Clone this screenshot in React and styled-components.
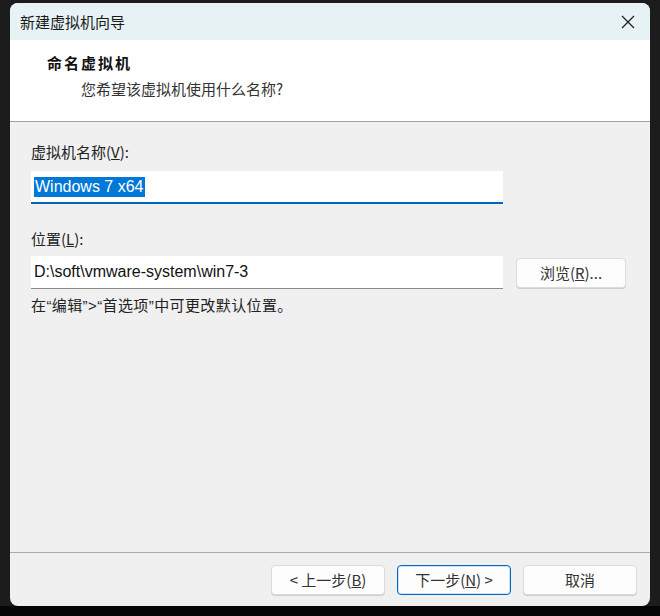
import React from "react";
import styled, { createGlobalStyle } from "styled-components";

const GlobalStyle = createGlobalStyle`
    html, body {
        margin: 0;
        padding: 0;
        background: #1c1c1c;
    }
    body {
        font-family: "Noto Sans CJK SC", "Liberation Sans", sans-serif;
        color: #1a1a1a;
    }
`;

const Screen = styled.div`
    width: 660px;
    height: 616px;
    padding: 3px 10px 0 10px;
    box-sizing: border-box;
    background: linear-gradient(#1c1c1c 0, #1c1c1c 606px, #050505 606px);
`;

const Window = styled.div`
    width: 640px;
    height: 603px;
    border-radius: 8px;
    overflow: hidden;
    background: #f0f0f0;
    display: flex;
    flex-direction: column;
`;

const TitleBar = styled.div`
    height: 37px;
    flex: none;
    display: flex;
    align-items: center;
    justify-content: space-between;
    padding: 0 14px 0 10px;
    background: #e7f2f5;
    font-size: 15px;
    color: #1a1a1a;
`;

const CloseIcon = styled.svg`
    width: 16px;
    height: 16px;
`;

const Header = styled.div`
    height: 82px;
    flex: none;
    background: #ffffff;
    border-bottom: 1px solid #a3a3a3;
    padding: 11px 0 0 37px;
    box-sizing: border-box;
`;

const HeaderTitle = styled.div`
    font-size: 15px;
    font-weight: 700;
    letter-spacing: 2px;
    line-height: 24px;
    color: #111;
`;

const HeaderSub = styled.div`
    font-size: 15px;
    line-height: 24px;
    padding-left: 34px;
    margin-top: 2px;
    color: #333;
`;

const Body = styled.div`
    flex: 1;
    padding: 19px 24px 0 21px;
`;

const Label = styled.div`
    font-size: 15px;
    line-height: 22px;
    color: #222;
    margin-top: ${(p) => p.$top || 0}px;
    margin-bottom: ${(p) => p.$gap || 6}px;
`;

const Key = styled.span`
    text-decoration: underline;
`;

const Row = styled.div`
    display: flex;
    align-items: center;
    gap: 13px;
`;

const Field = styled.div`
    width: 472px;
    height: 33px;
    box-sizing: border-box;
    background: #ffffff;
    border-bottom: ${(p) => (p.$focused ? "2px solid #0067c0" : "1px solid #8a8a8a")};
    display: flex;
    align-items: center;
    padding-left: 3px;
    font-family: "Liberation Sans", "Noto Sans CJK SC", sans-serif;
    font-size: 16px;
    color: #111;
`;

const Selected = styled.span`
    background: #0078d7;
    color: #ffffff;
    padding: 0 1px;
    line-height: 20px;
`;

const Button = styled.div`
    width: ${(p) => p.$w || 114}px;
    height: 30px;
    box-sizing: border-box;
    border-radius: 4px;
    background: #fdfdfd;
    border: 1px solid ${(p) => (p.$primary ? "#0067c0" : "#dcdcdc")};
    box-shadow: ${(p) => (p.$primary ? "inset 0 0 0 1px #cfe4f5" : "0 1px 0 #cfcfcf")};
    display: flex;
    align-items: center;
    justify-content: center;
    font-size: 15px;
    color: #333;
`;

const Note = styled.div`
    font-family: "Liberation Sans", "Noto Sans CJK SC", sans-serif;
    font-size: 15px;
    letter-spacing: 0.4px;
    line-height: 20px;
    margin-top: 7px;
    color: #222;
`;

const Footer = styled.div`
    height: 53px;
    flex: none;
    border-top: 1px solid #a9a9a9;
    display: flex;
    align-items: center;
    justify-content: flex-end;
    gap: 12px;
    padding: 0 13px 0 0;
`;

function App() {
    return (
        <Screen>
            <GlobalStyle />
            <Window>
                <TitleBar>
                    <span>新建虚拟机向导</span>
                    <CloseIcon viewBox="0 0 16 16">
                        <path d="M2 2 L14 14 M14 2 L2 14" stroke="#222" strokeWidth="1.3" fill="none" />
                    </CloseIcon>
                </TitleBar>
                <Header>
                    <HeaderTitle>命名虚拟机</HeaderTitle>
                    <HeaderSub>您希望该虚拟机使用什么名称?</HeaderSub>
                </Header>
                <Body>
                    <Label $gap={8}>
                        虚拟机名称(<Key>V</Key>):
                    </Label>
                    <Field $focused>
                        <Selected>Windows 7 x64</Selected>
                    </Field>
                    <Label $top={24} $gap={6}>
                        位置(<Key>L</Key>):
                    </Label>
                    <Row>
                        <Field>D:\soft\vmware-system\win7-3</Field>
                        <Button $w={110}>
                            浏览(<Key>R</Key>)...
                        </Button>
                    </Row>
                    <Note>在“编辑”&gt;“首选项”中可更改默认位置。</Note>
                </Body>
                <Footer>
                    <Button>
                        &lt; 上一步(<Key>B</Key>)
                    </Button>
                    <Button $primary>
                        下一步(<Key>N</Key>) &gt;
                    </Button>
                    <Button>取消</Button>
                </Footer>
            </Window>
        </Screen>
    );
}

export default App;
